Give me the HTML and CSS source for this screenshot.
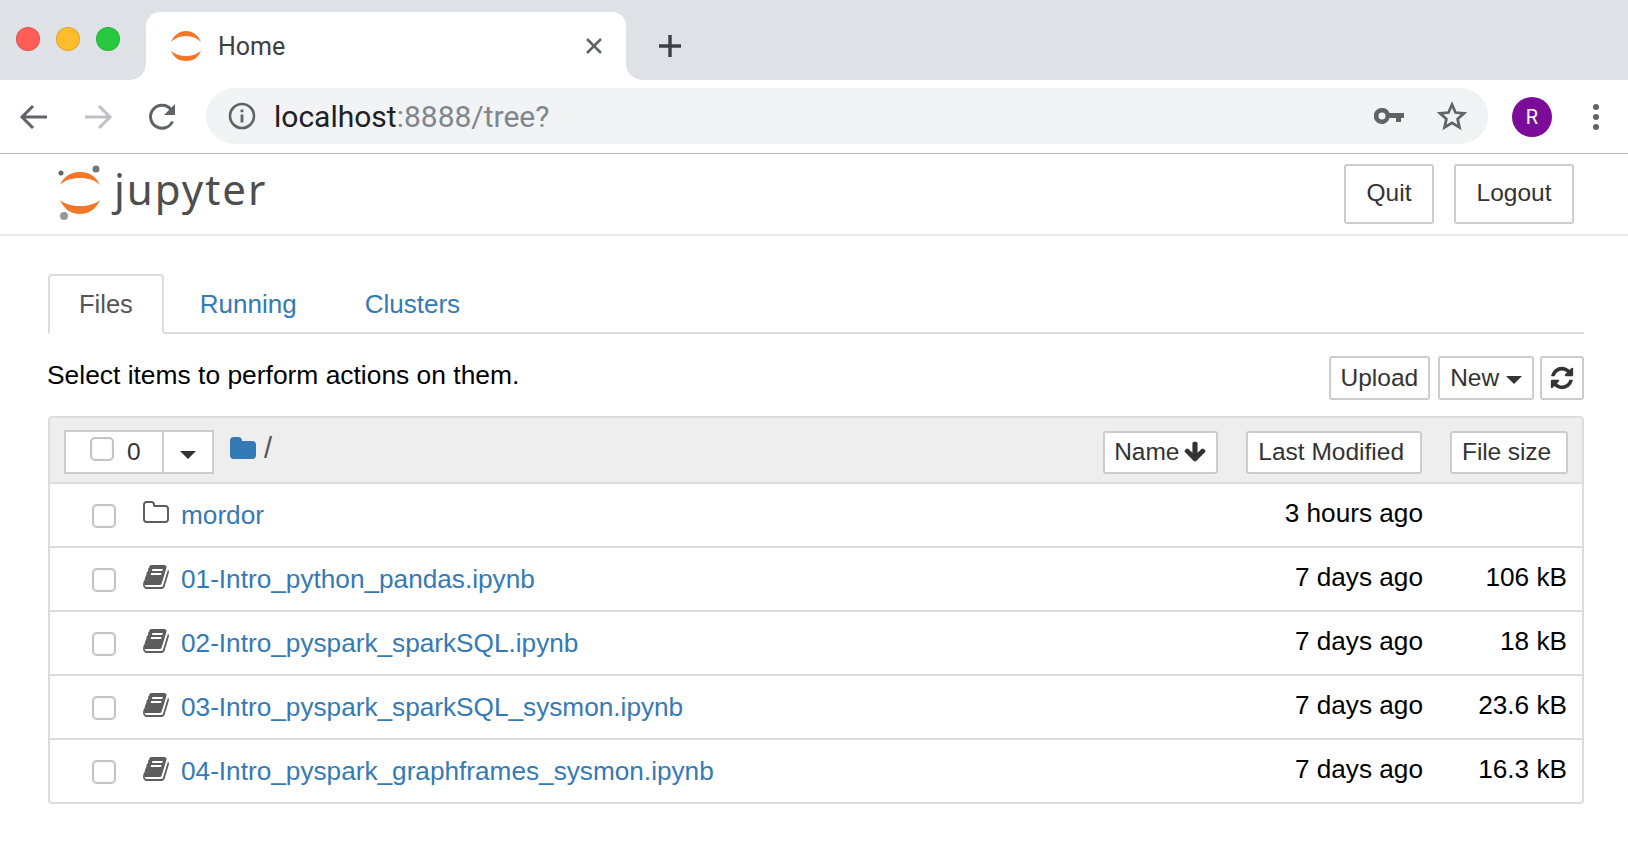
FILE: index.html
```html
<!DOCTYPE html>
<html lang="en">
<head>
    <meta charset="UTF-8">
    <title>Home</title>
    <link rel="stylesheet" href="styles.css">
</head>
<body>
    <svg class="defs" width="0" height="0">
        <symbol id="fa-refresh" viewBox="0 0 1792 1792"><path d="M1639 1056q0 5-1 7-64 268-268 434.5t-478 166.5q-146 0-282.5-55t-243.5-157l-129 129q-19 19-45 19t-45-19-19-45v-448q0-26 19-45t45-19h448q26 0 45 19t19 45-19 45l-137 137q71 66 161 102t187 36q134 0 250-65t186-179q11-17 53-117 8-23 30-23h192q13 0 22.5 9.5t9.5 22.5zm25-800v448q0 26-19 45t-45 19h-448q-26 0-45-19t-19-45 19-45l138-138q-148-137-349-137-134 0-250 65t-186 179q-11 17-53 117-8 23-30 23h-199q-13 0-22.5-9.5t-9.5-22.5v-7q65-268 270-434.5t480-166.5q146 0 284 55.5t245 156.5l130-129q19-19 45-19t45 19 19 45z"/></symbol>
        <symbol id="fa-arrow-down" viewBox="0 0 1792 1792"><path d="M1675 832q0 53-37 90l-651 652q-39 37-91 37-53 0-90-37l-651-652q-38-36-38-90 0-53 38-91l74-75q39-37 91-37 53 0 90 37l294 294v-704q0-52 38-90t90-38h128q52 0 90 38t38 90v704l294-294q37-37 90-37 52 0 91 37l75 75q37 39 37 91z"/></symbol>
        <symbol id="fa-folder" viewBox="0 0 1792 1792"><path d="M1728 608v704q0 92-66 158t-158 66h-1216q-92 0-158-66t-66-158v-960q0-92 66-158t158-66h320q92 0 158 66t66 158v32h672q92 0 158 66t66 158z"/></symbol>
        <symbol id="fa-folder-o" viewBox="0 0 1792 1792"><path d="M1600 1312v-704q0-40-28-68t-68-28h-704q-40 0-68-28t-28-68v-64q0-40-28-68t-68-28h-320q-40 0-68 28t-28 68v960q0 40 28 68t68 28h1216q40 0 68-28t28-68zm128-704v704q0 92-66 158t-158 66h-1216q-92 0-158-66t-66-158v-960q0-92 66-158t158-66h320q92 0 158 66t66 158v32h672q92 0 158 66t66 158z"/></symbol>
        <symbol id="fa-book" viewBox="0 0 1792 1792"><path d="M1703 478q40 57 18 129l-275 906q-19 64-76.5 107.5t-122.5 43.5h-923q-77 0-148.5-53.5t-99.5-131.5q-24-67-2-127 0-4 3-27t4-37q1-8-3-21.5t-3-19.5q2-11 8-21t16.5-23.5 16.5-23.5q23-38 45-91.5t30-91.5q3-10 .5-30t-.5-28q3-11 17-28t17-23q21-36 42-92t25-90q1-9-2.5-32t.5-28q4-13 22-30.5t22-22.5q19-26 42.5-84.5t27.5-96.5q1-8-3-25.5t-2-26.5q2-8 9-18t18-23 17-21q8-12 16.5-30.5t15-35 16-36 19.5-32 26.5-23.5 36-11.5 47.5 5.5l-1 3q38-9 51-9h761q74 0 114 56t18 130l-274 906q-36 119-71.5 153.5t-128.5 34.5h-869q-27 0-38 15-11 16-1 43 24 70 144 70h923q29 0 56-15.5t35-41.5l300-987q7-22 5-57 38 15 59 43zm-1064 2q-4 13 2 22.5t20 9.5h608q13 0 25.5-9.5t16.5-22.5l21-64q4-13-2-22.5t-20-9.5h-608q-13 0-25.5 9.5t-16.5 22.5zm-83 256q-4 13 2 22.5t20 9.5h608q13 0 25.5-9.5t16.5-22.5l21-64q4-13-2-22.5t-20-9.5h-608q-13 0-25.5 9.5t-16.5 22.5z"/></symbol>
    </svg>

    <!-- Ventana del navegador -->
    <div class="tabstrip">
        <div class="lights">
            <span class="light red"></span>
            <span class="light yellow"></span>
            <span class="light green"></span>
        </div>
        <div class="tab">
            <svg class="favicon" width="32" height="32" viewBox="0 0 32 32">
                <path fill="#f37726" d="M1 12C4 5 9 1 16 1s12 4 15 11C27 8 22 6 16 6S5 8 1 12z"/>
                <path fill="#f37726" d="M1 21c4 3 9 5 15 5s11-2 15-5c-3 7-8 10-15 10S4 28 1 21z"/>
            </svg>
            <span class="tab-title">Home</span>
            <svg class="tab-close" width="18" height="18" viewBox="0 0 18 18">
                <path d="M2 2l14 14M16 2L2 16" stroke="#5f6368" stroke-width="2.6" fill="none"/>
            </svg>
        </div>
        <svg class="tab-new" width="26" height="26" viewBox="0 0 26 26">
            <path d="M13 2v22M2 13h22" stroke="#3c4043" stroke-width="3.4" fill="none"/>
        </svg>
    </div>

    <div class="addressbar">
        <svg class="nav-icon" width="32" height="32" viewBox="0 0 32 32">
            <path d="M29 16H5M15 5L4 16l11 11" stroke="#5f6368" stroke-width="3" fill="none"/>
        </svg>
        <svg class="nav-icon" width="32" height="32" viewBox="0 0 32 32">
            <path d="M3 16h24M17 5l11 11-11 11" stroke="#bdc1c6" stroke-width="3" fill="none"/>
        </svg>
        <svg class="nav-icon" width="32" height="32" viewBox="0 0 32 32">
            <path d="M25.500 20.500A11.500 11.500 0 1 1 24 8.500" stroke="#5f6368" stroke-width="3" fill="none"/>
            <path d="M28 3v11H17z" fill="#5f6368"/>
        </svg>
        <div class="omnibox">
            <svg width="28" height="28" viewBox="0 0 28 28">
                <circle cx="14" cy="14" r="12" stroke="#5f6368" stroke-width="2.6" fill="none"/>
                <path d="M14 12.500v8M14 7.500v2.800" stroke="#5f6368" stroke-width="2.8" fill="none"/>
            </svg>
            <div class="url"><span class="host">localhost</span>:8888/tree?</div>
            <svg class="key" width="30" height="16" viewBox="0 0 30 16">
                <path fill-rule="evenodd" fill="#5f6368" d="M8 0a8 8 0 0 1 7.500 5H30v5h-3v4h-5v-4h-6.500A8 8 0 1 1 8 0zm0 4.500a3.500 3.500 0 1 0 0 7 3.500 3.500 0 0 0 0-7z"/>
            </svg>
            <svg class="star" width="30" height="30" viewBox="0 0 30 30">
                <path d="M15 3.500l3.500 8 8.500.8-6.400 5.700 1.900 8.500L15 21.900l-7.500 4.600 1.900-8.500L3 12.300l8.500-.8z" stroke="#5f6368" stroke-width="2.700" fill="none"/>
            </svg>
        </div>
        <div class="avatar">R</div>
        <div class="menu-dots"><i></i><i></i><i></i></div>
    </div>

    <!-- Cabecera de Jupyter -->
    <div class="header">
        <div class="logo">
            <svg width="50" height="56" viewBox="0 0 50 56">
                <path fill="#f37726" d="M4 21C8 12 15 8 24 8s16 4 20 13c-5-5-12-7-20-7S9 16 4 21z"/>
                <path fill="#f37726" d="M4 36c5 4 12 6 20 6s15-2 20-6c-4 9-11 14-20 14S8 45 4 36z"/>
                <circle cx="40" cy="5" r="3.500" fill="#767677"/>
                <circle cx="5" cy="9" r="2.500" fill="#616262"/>
                <circle cx="8" cy="52" r="4" fill="#989798"/>
            </svg>
            <span class="logo-text">jupyter</span>
        </div>
        <div class="header-buttons">
            <a class="btn btn-large">Quit</a>
            <a class="btn btn-large">Logout</a>
        </div>
    </div>

    <div class="container">
        <div class="tabs">
            <a class="tablink active">Files</a>
            <a class="tablink">Running</a>
            <a class="tablink">Clusters</a>
        </div>

        <div class="toolbar">
            <span class="hint">Select items to perform actions on them.</span>
            <div class="actions">
                <a class="btn">Upload</a>
                <a class="btn">New <span class="caret"></span></a>
                <a class="btn btn-icon"><svg width="26" height="26"><use href="#fa-refresh"/></svg></a>
            </div>
        </div>

        <div class="panel">
            <div class="panel-head">
                <div class="select-group">
                    <div class="select-count"><span class="check"></span><span>0</span></div>
                    <div class="select-drop"><span class="caret"></span></div>
                </div>
                <svg class="crumb-icon" width="28" height="28"><use href="#fa-folder"/></svg>
                <span class="crumb-sep">/</span>
                <div class="sorters">
                    <a class="btn btn-name">Name <svg class="sort-arrow" width="24" height="24"><use href="#fa-arrow-down"/></svg></a>
                    <a class="btn btn-wide">Last Modified</a>
                    <a class="btn btn-wide">File size</a>
                </div>
            </div>

            <div class="row">
                <span class="check"></span>
                <svg class="row-icon" width="28" height="28"><use href="#fa-folder-o"/></svg>
                <a class="name">mordor</a>
                <span class="date">3 hours ago</span>
                <span class="size"></span>
            </div>
            <div class="row">
                <span class="check"></span>
                <svg class="row-icon" width="28" height="28"><use href="#fa-book"/></svg>
                <a class="name">01-Intro_python_pandas.ipynb</a>
                <span class="date">7 days ago</span>
                <span class="size">106 kB</span>
            </div>
            <div class="row">
                <span class="check"></span>
                <svg class="row-icon" width="28" height="28"><use href="#fa-book"/></svg>
                <a class="name">02-Intro_pyspark_sparkSQL.ipynb</a>
                <span class="date">7 days ago</span>
                <span class="size">18 kB</span>
            </div>
            <div class="row">
                <span class="check"></span>
                <svg class="row-icon" width="28" height="28"><use href="#fa-book"/></svg>
                <a class="name">03-Intro_pyspark_sparkSQL_sysmon.ipynb</a>
                <span class="date">7 days ago</span>
                <span class="size">23.6 kB</span>
            </div>
            <div class="row">
                <span class="check"></span>
                <svg class="row-icon" width="28" height="28"><use href="#fa-book"/></svg>
                <a class="name">04-Intro_pyspark_graphframes_sysmon.ipynb</a>
                <span class="date">7 days ago</span>
                <span class="size">16.3 kB</span>
            </div>
        </div>
    </div>
</body>
</html>
```

FILE: styles.css
```css
body {
    margin: 0;
    background-color: #fff;
    font-family: "Liberation Sans", Arial, sans-serif;
    font-size: 26px;
    color: #000;
    overflow: hidden;
}

.defs {
    position: absolute;
}

/* Barra de pestañas */
.tabstrip {
    height: 80px;
    background-color: #dee1e6;
    display: flex;
}
.lights {
    width: 146px;
    box-sizing: border-box;
    padding: 27px 0 0 16px;
    display: flex;
    gap: 16px;
}
.light {
    width: 24px;
    height: 24px;
    box-sizing: border-box;
    border-radius: 50%;
    border: 1px solid rgba(0, 0, 0, 0.12);
}
.red { background-color: #ff5f57; }
.yellow { background-color: #ffbd2e; }
.green { background-color: #28c941; }

.tab {
    position: relative;
    width: 480px;
    height: 68px;
    margin-top: 12px;
    background-color: #fff;
    border-radius: 14px 14px 0 0;
    display: flex;
    align-items: center;
    box-sizing: border-box;
    padding: 0 23px 0 24px;
}
.tab::before,
.tab::after {
    content: "";
    position: absolute;
    bottom: 0;
    width: 16px;
    height: 16px;
    background: radial-gradient(circle at 0 0, transparent 15.500px, #fff 16px);
}
.tab::before {
    left: -16px;
}
.tab::after {
    right: -16px;
    transform: scaleX(-1);
}
.favicon {
    flex: none;
}
.tab-title {
    font-family: Roboto, sans-serif;
    font-size: 25px;
    color: #3c4043;
    margin-left: 16px;
    flex: 1;
}
.tab-new {
    margin: 33px 0 0 31px;
}

/* Barra de direcciones */
.addressbar {
    height: 73px;
    border-bottom: 1px solid #b7b7b7;
    display: flex;
    align-items: center;
    padding: 0 0 0 18px;
}
.nav-icon {
    margin-right: 32px;
}
.nav-icon:nth-of-type(3) {
    margin-left: 1px;
    margin-right: 27px;
}
.omnibox {
    width: 1282px;
    height: 56px;
    margin-top: -1px;
    background-color: #f1f3f4;
    border-radius: 28px;
    display: flex;
    align-items: center;
    box-sizing: border-box;
    padding: 0 21px 0 22px;
}
.url {
    font-family: Roboto, sans-serif;
    font-size: 30px;
    color: #80868b;
    margin-left: 18px;
    flex: 1;
}
.host {
    color: #202124;
}
.star {
    margin-left: 33px;
}
.avatar {
    width: 40px;
    height: 40px;
    margin-left: 24px;
    border-radius: 50%;
    background-color: #7b0b98;
    color: #fff;
    font-family: Roboto, sans-serif;
    font-size: 20px;
    display: flex;
    align-items: center;
    justify-content: center;
}
.menu-dots {
    margin-left: 41px;
    display: flex;
    flex-direction: column;
    gap: 4px;
}
.menu-dots i {
    width: 6px;
    height: 6px;
    border-radius: 50%;
    background-color: #5f6368;
}

/* Cabecera */
.header {
    height: 80px;
    border-bottom: 2px solid #e7e7e7;
    display: flex;
    justify-content: space-between;
    padding: 0 54px 0 56px;
}
.logo {
    display: flex;
    align-items: flex-start;
    padding-top: 10px;
}
.logo-text {
    font-family: "Noto Sans", sans-serif;
    font-size: 42px;
    line-height: 50px;
    letter-spacing: 2px;
    color: #4e4e4e;
    margin: 0 0 0 8px;
}
.header-buttons {
    display: flex;
    gap: 20px;
    padding-top: 10px;
}

.btn {
    display: flex;
    align-items: center;
    justify-content: center;
    box-sizing: border-box;
    height: 44px;
    padding: 0 10px;
    border: 2px solid #ccc;
    border-radius: 3px;
    background-color: #fff;
    color: #333;
    font-size: 24.500px;
    white-space: pre;
}
.btn-large {
    height: 60px;
    width: 90px;
    padding-bottom: 2px;
}
.btn-large + .btn-large {
    width: 120px;
}

/* Pestañas de Jupyter */
.container {
    margin: 38px 44px 0 48px;
}
.tabs {
    height: 60px;
    box-sizing: border-box;
    border-bottom: 2px solid #ddd;
    display: flex;
}
.tablink {
    height: 60px;
    box-sizing: border-box;
    padding: 0 32px;
    margin-right: 4px;
    color: #337ab7;
    line-height: 60px;
}
.tablink.active {
    padding: 0 29px;
    color: #555;
    font-size: 25.500px;
    line-height: 56px;
    background-color: #fff;
    border: 2px solid #ddd;
    border-bottom-color: #fff;
    border-radius: 4px 4px 0 0;
}

.toolbar {
    height: 82px;
    display: flex;
    justify-content: space-between;
    align-items: flex-start;
    box-sizing: border-box;
    padding-top: 22px;
}
.hint {
    margin-left: -1px;
    font-size: 26.400px;
    line-height: 38px;
}
.actions {
    display: flex;
    gap: 8px;
}
.actions .btn:nth-child(2) {
    margin-right: -2px;
}
.btn-icon {
    width: 44px;
    padding: 0;
}
.btn-icon svg {
    fill: #333;
}
.caret {
    display: inline-block;
    width: 0;
    height: 0;
    border-top: 8px solid #333;
    border-left: 8px solid transparent;
    border-right: 8px solid transparent;
}
.actions .caret {
    margin-top: 4px;
}

/* Lista de archivos */
.panel {
    border: 2px solid #ddd;
    border-radius: 4px;
}
.panel-head {
    height: 64px;
    background-color: #eee;
    display: flex;
    align-items: center;
    box-sizing: border-box;
    padding: 12px 14px 8px 14px;
}
.select-group {
    display: flex;
    height: 44px;
    width: 150px;
    box-sizing: border-box;
    border: 2px solid #ccc;
    background-color: #fff;
}
.select-count {
    width: 98px;
    box-sizing: border-box;
    padding-left: 24px;
    display: flex;
    align-items: center;
    gap: 13px;
    color: #333;
    font-size: 24.500px;
    border-right: 2px solid #ccc;
}
.select-count .check {
    margin: -6px 0 0 0;
}
.select-drop {
    flex: 1;
    display: flex;
    align-items: center;
    justify-content: center;
    padding-top: 5px;
}
.check {
    flex: none;
    width: 24px;
    height: 24px;
    margin-top: 2px;
    box-sizing: border-box;
    border: 2px solid #c4c4c4;
    border-radius: 5px;
    background-color: #fff;
    box-shadow: inset 0 0 2px rgba(0, 0, 0, 0.08);
}
.crumb-icon {
    margin: -7px 0 0 15px;
    fill: #337ab7;
}
.crumb-sep {
    margin: -8px 0 0 7px;
    color: #555;
    font-size: 29px;
}
.sorters {
    margin-left: auto;
    display: flex;
    gap: 28px;
}
.sorters .btn {
    height: 43px;
}
.sorters .btn-name {
    padding: 0 9px;
}
.sorters .btn-wide {
    padding-right: 16px;
}
.sorters .btn:last-child {
    padding-right: 15px;
    letter-spacing: -0.1px;
}
.sort-arrow {
    fill: #333;
    margin-left: -3px;
}

.row {
    height: 64px;
    box-sizing: border-box;
    border-top: 2px solid #ddd;
    display: flex;
    align-items: center;
    padding: 0 15px 0 42px;
    font-size: 26.200px;
}
.row-icon {
    margin: -4px 0 0 26px;
    fill: #5d5d5d;
}
.name {
    flex: 1;
    margin: 0 0 0 11px;
    color: #337ab7;
}
.date {
    margin-top: -4px;
}
.size {
    width: 144px;
    margin-top: -4px;
    text-align: right;
}
```
